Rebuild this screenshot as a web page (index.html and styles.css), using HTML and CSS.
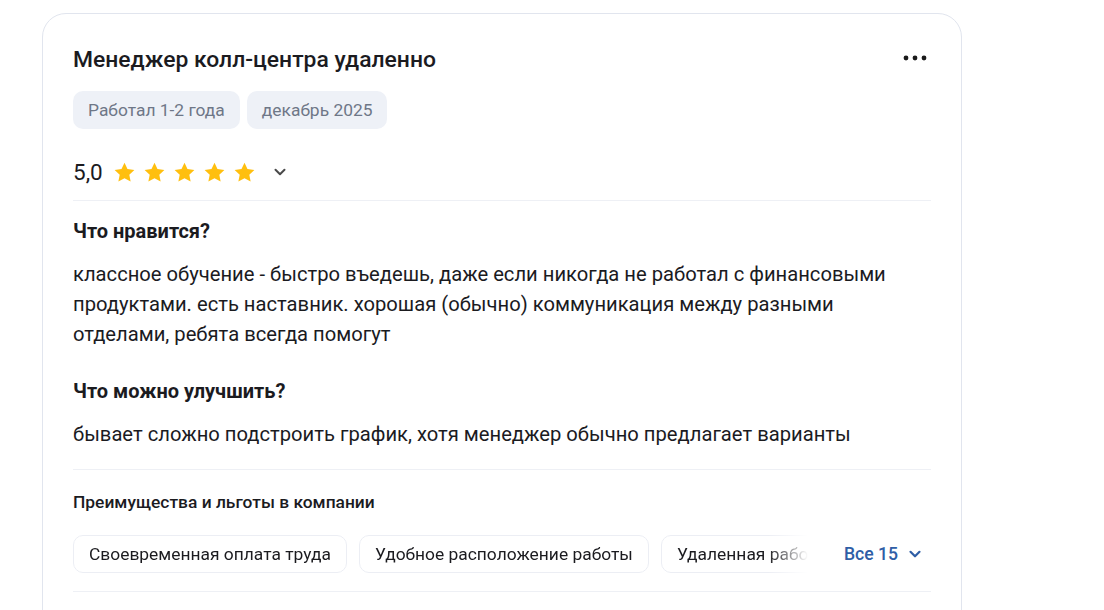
FILE: index.html
```html
<!DOCTYPE html>
<html lang="ru">
<head>
<meta charset="utf-8">
<title>Отзыв</title>
<link rel="stylesheet" href="styles.css">
</head>
<body>
<div class="page">
  <article class="card">
    <header class="card-head">
      <h2 class="title">Менеджер колл-центра удаленно</h2>
      <button class="more" aria-label="Ещё">
        <svg width="24" height="6" viewBox="0 0 24 6"><circle cx="3" cy="3" r="2.4" fill="#1a1a1a"/><circle cx="12" cy="3" r="2.4" fill="#1a1a1a"/><circle cx="21" cy="3" r="2.4" fill="#1a1a1a"/></svg>
      </button>
    </header>
    <div class="tags">
      <span class="tag">Работал 1-2 года</span>
      <span class="tag">декабрь 2025</span>
    </div>
    <div class="rating">
      <span class="score">5,0</span>
      <span class="stars">
        <svg class="star" viewBox="0 0 24 24"><path d="M12 1.8l3.1 6.6 7.2.9-5.3 5 1.4 7.1L12 17.9l-6.4 3.5 1.4-7.1-5.3-5 7.2-.9z"/></svg>
        <svg class="star" viewBox="0 0 24 24"><path d="M12 1.8l3.1 6.6 7.2.9-5.3 5 1.4 7.1L12 17.9l-6.4 3.5 1.4-7.1-5.3-5 7.2-.9z"/></svg>
        <svg class="star" viewBox="0 0 24 24"><path d="M12 1.8l3.1 6.6 7.2.9-5.3 5 1.4 7.1L12 17.9l-6.4 3.5 1.4-7.1-5.3-5 7.2-.9z"/></svg>
        <svg class="star" viewBox="0 0 24 24"><path d="M12 1.8l3.1 6.6 7.2.9-5.3 5 1.4 7.1L12 17.9l-6.4 3.5 1.4-7.1-5.3-5 7.2-.9z"/></svg>
        <svg class="star" viewBox="0 0 24 24"><path d="M12 1.8l3.1 6.6 7.2.9-5.3 5 1.4 7.1L12 17.9l-6.4 3.5 1.4-7.1-5.3-5 7.2-.9z"/></svg>
      </span>
      <svg class="chev" width="14" height="14" viewBox="0 0 14 14"><path d="M2.5 4.8L7 9.3l4.5-4.5" fill="none" stroke="#4a4a4a" stroke-width="2" stroke-linecap="round" stroke-linejoin="round"/></svg>
    </div>
    <hr class="divider divider-rating">
    <section class="block">
      <h3 class="block-title">Что нравится?</h3>
      <p class="block-text">классное обучение - быстро въедешь, даже если никогда не работал с финансовыми продуктами. есть наставник. хорошая (обычно) коммуникация между разными отделами, ребята всегда помогут</p>
    </section>
    <section class="block block-second">
      <h3 class="block-title">Что можно улучшить?</h3>
      <p class="block-text">бывает сложно подстроить график, хотя менеджер обычно предлагает варианты</p>
    </section>
    <hr class="divider divider-text">
    <h4 class="benefits-title">Преимущества и льготы в компании</h4>
    <div class="benefits">
      <div class="chips">
        <span class="chip">Своевременная оплата труда</span>
        <span class="chip">Удобное расположение работы</span>
        <span class="chip">Удаленная работа</span>
      </div>
      <button class="all">Все 15
        <svg width="14" height="14" viewBox="0 0 14 14"><path d="M2.5 4.8L7 9.3l4.5-4.5" fill="none" stroke="#2f5ea6" stroke-width="2.2" stroke-linecap="round" stroke-linejoin="round"/></svg>
      </button>
    </div>
    <hr class="divider divider-bottom">
  </article>
</div>
</body>
</html>
```
FILE: styles.css
```css
* { box-sizing: border-box; }
html, body { margin: 0; padding: 0; background: #fff; }
body {
  font-family: Roboto, "Noto Sans", Arial, sans-serif;
  color: #1b1b1f;
  overflow: hidden;
  height: 610px;
}
.page {
  padding: 13px 0 0 42px;
  width: 1104px;
  height: 610px;
}
.card {
  width: 920px;
  border: 1px solid #e1e5ee;
  border-radius: 24px;
  padding: 30px 30px 40px;
  min-height: 700px;
}
.card-head {
  display: flex;
  align-items: center;
  justify-content: space-between;
  height: 32px;
}
.title {
  margin: 0;
  font-size: 22.9px;
  font-weight: 500;
  line-height: 32px;
  letter-spacing: 0;
}
.more {
  border: 0;
  background: none;
  padding: 0;
  margin-right: 4px;
  margin-top: -5px;
  display: flex;
}
.tags {
  display: flex;
  gap: 7px;
  margin-top: 15px;
}
.tag {
  display: inline-flex;
  align-items: center;
  height: 38px;
  padding: 0 15px;
  background: #eef1f7;
  border-radius: 10px;
  color: #6e7787;
  font-size: 17.4px;
}
.rating {
  display: flex;
  align-items: center;
  margin-top: 27px;
  height: 32px;
}
.score {
  font-size: 22.5px;
  line-height: 32px;
  margin-right: 10px;
}
.stars {
  display: flex;
  gap: 7px;
}
.star {
  width: 23px;
  height: 23px;
  fill: #ffbf0f;
}
.chev { margin-left: 17px; }
.divider {
  border: 0;
  height: 1px;
  background: #eef0f5;
  margin: 0;
}
.divider-rating { margin-top: 12px; }
.block-title {
  margin: 17px 0 0;
  font-size: 20px;
  font-weight: 700;
  line-height: 26px;
}
.block-text {
  margin: 15px 0 0;
  max-width: 835px;
  font-size: 20.2px;
  line-height: 30px;
}
.block-second .block-title { margin-top: 29px; }
.divider-text { margin-top: 20px; }
.benefits-title {
  margin: 20px 0 0;
  font-size: 17.4px;
  font-weight: 500;
  line-height: 24px;
}
.benefits {
  display: flex;
  align-items: center;
  margin-top: 21px;
}
.chips {
  display: flex;
  gap: 12px;
  width: 738px;
  overflow: hidden;
  -webkit-mask-image: linear-gradient(to right, #000 695px, transparent 735px);
  mask-image: linear-gradient(to right, #000 695px, transparent 735px);
}
.chip {
  flex: none;
  display: inline-flex;
  align-items: center;
  height: 38px;
  padding: 0 15px;
  border: 1px solid #eceef4;
  border-radius: 10px;
  font-size: 17.4px;
  white-space: nowrap;
}
.all {
  display: flex;
  align-items: center;
  gap: 10px;
  margin-left: 33px;
  border: 0;
  background: none;
  padding: 0;
  font-family: inherit;
  font-size: 17.6px;
  font-weight: 500;
  color: #2f5ea6;
}
.divider-bottom { margin-top: 18px; }
```
